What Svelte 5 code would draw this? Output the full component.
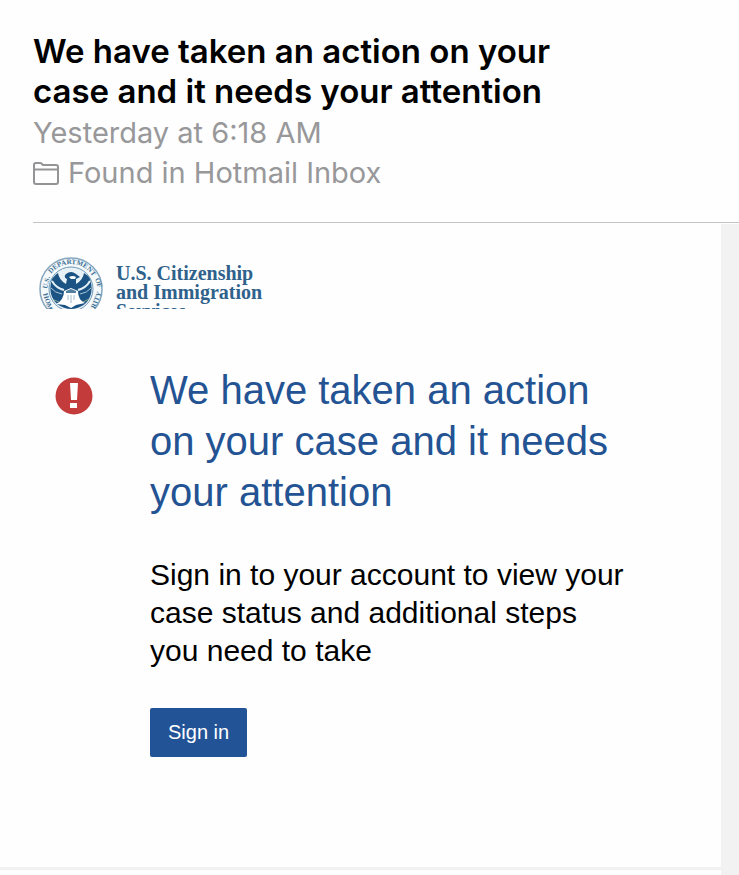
<script lang="ts">
	const subject = 'We have taken an action on your case and it needs your attention';
	const received = 'Yesterday at 6:18 AM';
	const mailbox = 'Found in Hotmail Inbox';
	const agency = ['U.S. Citizenship', 'and Immigration', 'Services'];
</script>

<main class="mail">
	<header class="mail-header">
		<h1>{subject}</h1>
		<p>{received}</p>
		<p class="mailbox">
			<svg class="folder" viewBox="0 0 26 23" aria-hidden="true">
				<path d="M1 20V3Q1 1 3 1H7Q8 1 9 2L10 3H23Q25 3 25 5V20Q25 22 23 22H3Q1 22 1 20ZM1 7.5H25" />
			</svg>
			<span>{mailbox}</span>
		</p>
	</header>

	<div class="message">
		<article>
			<div class="brand">
				<svg class="seal" viewBox="0 0 64 64" aria-hidden="true">
					<defs>
						<path id="seal-top" d="M7 32A25 25 0 0 1 57 32" />
					</defs>
					<circle cx="32" cy="32" r="31" fill="#f4f9fb" stroke="#86a7bf" stroke-width="1.5" />
					<text class="seal-text"><textPath href="#seal-top" startOffset="52%" text-anchor="middle">DEPARTMENT</textPath></text>
					<text class="seal-text" transform="translate(8 32) rotate(-76)">U.S.</text>
					<text class="seal-text" transform="translate(56 22) rotate(70)">OF</text>
					<text class="seal-text" transform="translate(4 37) rotate(72)">HOM</text>
					<text class="seal-text" transform="translate(56 52) rotate(-68)">RITY</text>
					<circle cx="32" cy="32" r="22" fill="#e8f1f6" stroke="#6f98b5" stroke-width="1" />
					<!-- eagle: wings and body, feather bands, head, then the shield -->
					<path fill="#1b5484" d="M13 22Q17 17 19 16Q20 23 27 27L28 22Q24 20 27 17Q32 13 37 17L41 20L37 22L37 27Q44 23 45 16Q49 18 51 22Q56 37 46 47Q32 57 18 47Q8 37 13 22Z" />
					<path fill="none" stroke="#e4eff5" stroke-width="2" d="M13 24Q17 31 25 33M51 24Q47 31 39 33" />
					<path fill="none" stroke="#a9c6d8" stroke-width="1" d="M12 31Q16 36 23 37M52 31Q48 36 41 37" />
					<path fill="#fff" d="M30 20Q34 18 37 20L36 22L32 22Z" />
					<path fill="#fff" d="M25 34L32 31L39 34Q39 43 46 46L37 48L32 51L26 48L17 47Q25 43 25 34Z" />
					<path fill="#507f9f" d="M27 34L32 32L37 34V36H27Z" />
					<path stroke="#a0bccf" stroke-width="1" d="M29 38V43M32 38V46M35 38V43" />
					<path fill="none" stroke="#86a98c" stroke-width="1" d="M15 43L20 45M44 45L50 42" />
				</svg>
				<p class="wordmark">
					{#each agency as line}
						<span>{line}</span>
					{/each}
				</p>
			</div>

			<div class="notice">
				<svg class="alert" viewBox="0 0 38 38" role="img" aria-label="Alert">
					<circle cx="19" cy="19" r="18.5" fill="#c33b3b" />
					<path fill="#fff" d="M15 6H23L22 23H16ZM15 26H22V31H15Z" />
				</svg>
				<div class="copy">
					<h2>{subject}</h2>
					<p>Sign in to your account to view your case status and additional steps you need to take</p>
					<button type="button">Sign in</button>
				</div>
			</div>
		</article>
	</div>
</main>

<style>
	:global(body) {
		margin: 0;
		background: #fefefe;
	}

	h1, h2, p {
		margin: 0;
	}

	.mail {
		display: flex;
		flex-direction: column;
		min-height: 100vh;
		font-family: Inter, "Liberation Sans", sans-serif;
	}

	.mail-header {
		margin-left: 33px;
		padding: 31px 140px 29px 0;
		border-bottom: 1px solid #c4c4c6;
		color: #98989a;
		font-size: 29px;
		line-height: 40px;
	}

	h1 {
		margin-bottom: 2px;
		color: #000;
		font-size: 33px;
		font-weight: 600;
		line-height: 40px;
	}

	.mailbox {
		display: flex;
		align-items: center;
		gap: 9px;
	}

	.folder {
		width: 26px;
		height: 23px;
		fill: none;
		stroke: #949496;
		stroke-width: 2;
	}

	.message {
		flex: 1;
		margin-top: 1px;
		border-right: 18px solid #f2f2f2;
	}

	article {
		padding: 33px 92px 110px 39px;
		border-bottom: 3px solid #f1f1f1;
		font-family: "Liberation Sans", Arial, sans-serif;
	}

	.brand {
		display: flex;
		gap: 13px;
		height: 52px;
		overflow: hidden;
	}

	.seal {
		flex: none;
		width: 64px;
		height: 64px;
	}

	.seal-text {
		fill: #3d6f94;
		font: 700 7px "Liberation Serif", serif;
	}

	.wordmark {
		padding-top: 7px;
		color: #2f618b;
		font: 700 20px/19px "Liberation Serif", serif;
	}

	.wordmark span {
		display: block;
	}

	.notice {
		display: flex;
		gap: 57px;
		margin-top: 56px;
		padding-left: 16px;
	}

	.alert {
		flex: none;
		width: 38px;
		height: 38px;
		margin-top: 12px;
	}

	h2 {
		color: #235393;
		font-size: 40px;
		font-weight: 400;
		line-height: 51px;
	}

	.copy p {
		margin: 38px 0;
		color: #000;
		font-size: 30px;
		line-height: 38px;
	}

	button {
		display: block;
		padding: 12px 18px;
		border: 0;
		border-radius: 2px;
		background: #235397;
		color: #fff;
		font: 20px/25px "Liberation Sans", Arial, sans-serif;
	}
</style>
